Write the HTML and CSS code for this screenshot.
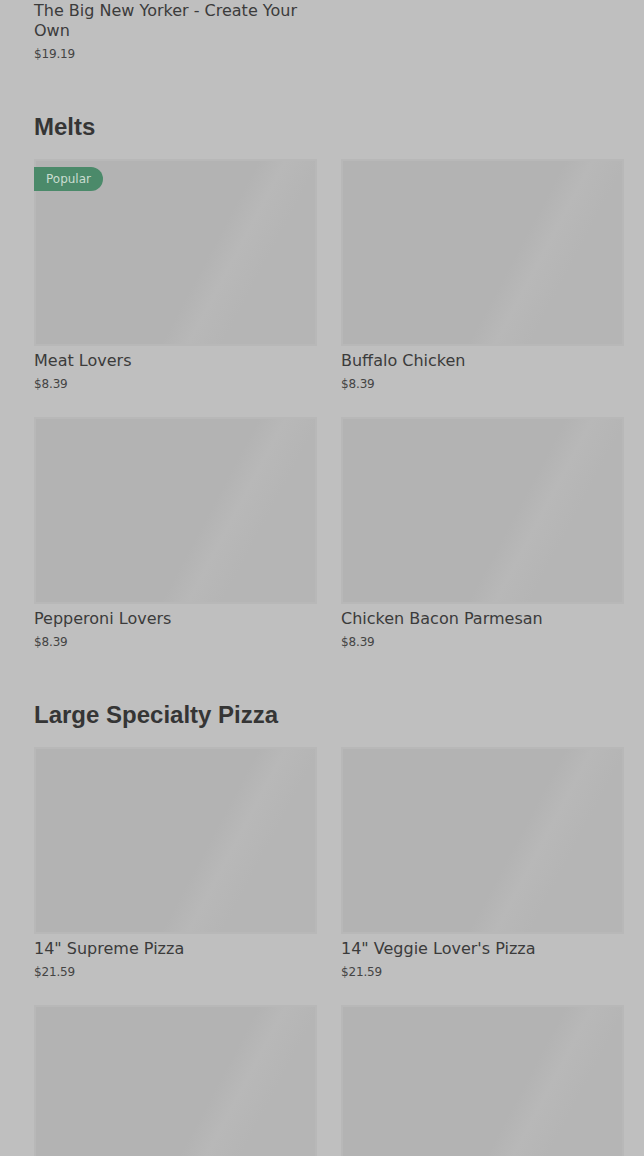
FILE: index.html
```html
<!DOCTYPE html>
<html lang="en">
<head>
<meta charset="utf-8">
<title>Menu</title>
<link rel="stylesheet" href="styles.css">
</head>
<body>
<main class="menu">
  <section class="section section-partial">
    <div class="grid">
      <article class="card">
        <h3 class="name">The Big New Yorker - Create Your Own</h3>
        <p class="price">$19.19</p>
      </article>
    </div>
  </section>

  <section class="section">
    <h2 class="heading">Melts</h2>
    <div class="grid">
      <article class="card">
        <div class="thumb"><span class="badge">Popular</span></div>
        <h3 class="name">Meat Lovers</h3>
        <p class="price">$8.39</p>
      </article>
      <article class="card">
        <div class="thumb"></div>
        <h3 class="name">Buffalo Chicken</h3>
        <p class="price">$8.39</p>
      </article>
      <article class="card">
        <div class="thumb"></div>
        <h3 class="name">Pepperoni Lovers</h3>
        <p class="price">$8.39</p>
      </article>
      <article class="card">
        <div class="thumb"></div>
        <h3 class="name">Chicken Bacon Parmesan</h3>
        <p class="price">$8.39</p>
      </article>
    </div>
  </section>

  <section class="section">
    <h2 class="heading">Large Specialty Pizza</h2>
    <div class="grid">
      <article class="card">
        <div class="thumb"></div>
        <h3 class="name">14" Supreme Pizza</h3>
        <p class="price">$21.59</p>
      </article>
      <article class="card">
        <div class="thumb"></div>
        <h3 class="name">14" Veggie Lover's Pizza</h3>
        <p class="price">$21.59</p>
      </article>
      <article class="card">
        <div class="thumb"></div>
      </article>
      <article class="card">
        <div class="thumb"></div>
      </article>
    </div>
  </section>
</main>
</body>
</html>
```

FILE: styles.css
```css
html, body {
  margin: 0;
  padding: 0;
  background: #bfbfbf;
}

body {
  font-family: "DejaVu Sans", Verdana, sans-serif;
  color: #3b3b3b;
  overflow: hidden;
}

.menu {
  padding: 1px 20px 0 34px;
  display: flex;
  flex-direction: column;
  gap: 49px;
}

.heading {
  margin: 0 0 18px;
  font-family: "Liberation Sans", Arial, sans-serif;
  font-weight: 700;
  font-size: 24px;
  line-height: 28px;
  color: #353535;
}

.grid {
  display: grid;
  grid-template-columns: 1fr 1fr;
  column-gap: 24px;
  row-gap: 23px;
}

.card {
  display: flex;
  flex-direction: column;
  min-width: 0;
}

.thumb {
  position: relative;
  height: 187px;
  background: linear-gradient(118deg, #b3b3b3 0%, #b3b3b3 59%, #b8b8b8 66%, #b5b5b5 75%, #b5b5b5 100%);
  box-shadow: inset 0 0 0 2px #b8b8b8;
}

.badge {
  position: absolute;
  top: 8px;
  left: 0;
  padding: 4px 12px;
  font-size: 12px;
  line-height: 16px;
  color: #c9dcd0;
  background: #4b8a6a;
  border-radius: 0 12px 12px 0;
}

.name {
  margin: 5px 0 0;
  font-size: 16px;
  font-weight: 400;
  line-height: 20px;
  color: #3b3b3b;
}

.section-partial .name {
  margin-top: 0;
}

.price {
  margin: 3px 0 0;
  font-size: 12px;
  line-height: 20px;
  letter-spacing: -0.15px;
  color: #444444;
}
```
